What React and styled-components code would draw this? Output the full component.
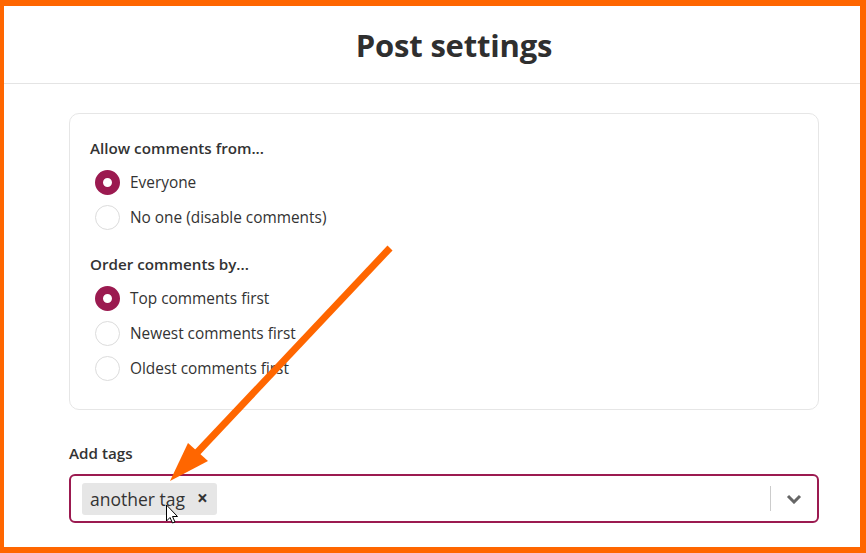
import React from "react";
import styled, { createGlobalStyle } from "styled-components";

const GlobalStyle = createGlobalStyle`
  html, body { margin: 0; padding: 0; background: #fff; }
  body { font-family: "Open Sans", "Noto Sans", sans-serif; color: #333; }
  * { box-sizing: border-box; }
`;

const ACCENT = "#9b1a50";

const Frame = styled.div`
  position: relative;
  width: 866px;
  height: 553px;
  border-style: solid;
  border-color: #ff6600;
  border-width: 6px 6px 6px 4px;
  background: #fff;
  overflow: hidden;
`;

const Header = styled.header`
  height: 78px;
  border-bottom: 1px solid #e4e4e4;
  display: flex;
  align-items: center;
  justify-content: center;
  padding-left: 44px;
`;

const Title = styled.h1`
  margin: 0;
  font-size: 31px;
  font-weight: 700;
  color: #2f2f2f;
  letter-spacing: -0.2px;
`;

const Main = styled.main`
  padding: 29px 41px 0 65px;
`;

const Card = styled.section`
  border: 1px solid #e6e6e6;
  border-radius: 10px;
  padding: 24px 20px 23px;
  display: flex;
  flex-direction: column;
  gap: 19px;
`;

const Group = styled.div`
  display: flex;
  flex-direction: column;
`;

const GroupTitle = styled.div`
  font-size: 15.2px;
  line-height: 20px;
  font-weight: 600;
  color: #333;
  margin-bottom: 7px;
`;

const RadioRow = styled.label`
  height: 35px;
  display: flex;
  align-items: center;
  gap: 10px;
  padding-left: 5px;
  font-size: 15.4px;
  color: #333;
`;

const RadioCircle = styled.span`
  width: 25px;
  height: 25px;
  border-radius: 50%;
  flex: none;
  border: ${(p) => (p.$checked ? `8px solid ${ACCENT}` : "1px solid #dcdcdc")};
  background: #fff;
`;

const FieldLabel = styled.div`
  margin-top: 33px;
  font-size: 15.2px;
  line-height: 20px;
  font-weight: 600;
  color: #333;
`;

const TagInput = styled.div`
  margin-top: 11px;
  height: 49px;
  border: 2px solid ${ACCENT};
  border-radius: 6px;
  display: flex;
  align-items: center;
  padding-left: 11px;
`;

const Chip = styled.div`
  height: 32px;
  background: #e6e6e6;
  border-radius: 3px;
  display: flex;
  align-items: center;
  padding: 0 9px 0 8px;
  gap: 12px;
`;

const ChipText = styled.span`
  font-size: 17.5px;
  color: #333;
`;

const ChipRemove = styled.span`
  font-size: 19px;
  font-weight: 700;
  color: #333;
  line-height: 1;
`;

const Spacer = styled.div`
  flex: 1;
`;

const Indicators = styled.div`
  display: flex;
  align-items: center;
  height: 100%;
`;

const Separator = styled.span`
  width: 1px;
  height: 25px;
  background: #cccccc;
`;

const ChevronBox = styled.div`
  width: 46px;
  display: flex;
  justify-content: center;
  align-items: center;
`;

const Overlay = styled.svg`
  position: absolute;
  left: -4px;
  top: -6px;
  width: 866px;
  height: 553px;
  pointer-events: none;
`;

function Radio({ checked, children }) {
  return (
    <RadioRow>
      <RadioCircle $checked={checked} />
      {children}
    </RadioRow>
  );
}

export default function App() {
  return (
    <>
      <GlobalStyle />
      <Frame>
        <Header>
          <Title>Post settings</Title>
        </Header>
        <Main>
          <Card>
            <Group>
              <GroupTitle>Allow comments from...</GroupTitle>
              <Radio checked>Everyone</Radio>
              <Radio>No one (disable comments)</Radio>
            </Group>
            <Group>
              <GroupTitle>Order comments by...</GroupTitle>
              <Radio checked>Top comments first</Radio>
              <Radio>Newest comments first</Radio>
              <Radio>Oldest comments first</Radio>
            </Group>
          </Card>
          <FieldLabel>Add tags</FieldLabel>
          <TagInput>
            <Chip>
              <ChipText>another tag</ChipText>
              <ChipRemove>×</ChipRemove>
            </Chip>
            <Spacer />
            <Indicators>
              <Separator />
              <ChevronBox>
                <svg width="16" height="10" viewBox="0 0 16 10">
                  <polyline points="2,2 8,8 14,2" fill="none" stroke="#666" strokeWidth="3" />
                </svg>
              </ChevronBox>
            </Indicators>
          </TagInput>
        </Main>
        <Overlay viewBox="0 0 866 553">
          <line x1="390" y1="248" x2="192" y2="458" stroke="#ff6600" strokeWidth="7" strokeLinecap="butt" />
          <polygon points="170,481 188,443 208,461" fill="#ff6600" />
          <path
            d="M166.5 505 L166.5 521 L170 517.5 L172.5 523 L175 522 L172.5 516.5 L177.5 516.5 Z"
            fill="#fff"
            stroke="#000"
            strokeWidth="1"
            strokeLinejoin="miter"
          />
        </Overlay>
      </Frame>
    </>
  );
}
